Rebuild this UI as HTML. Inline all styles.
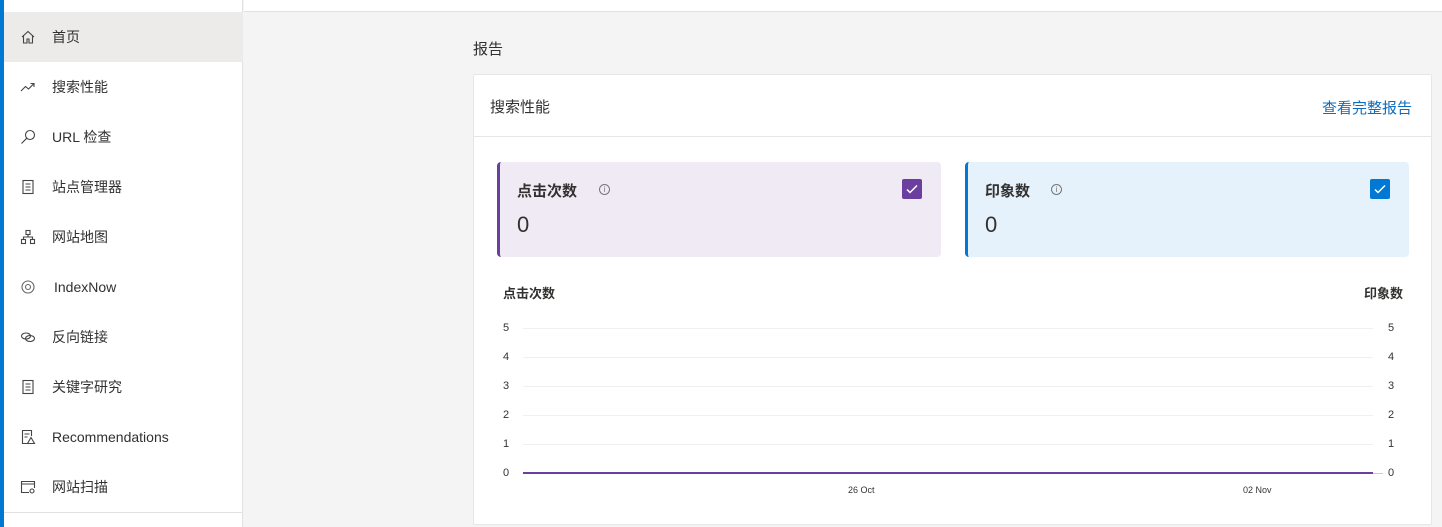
<!DOCTYPE html>
<html><head><meta charset="utf-8"><style>
*{margin:0;padding:0;box-sizing:border-box}
body{width:1442px;height:527px;overflow:hidden;background:#f4f4f4;font-family:"Liberation Sans","Noto Sans CJK SC",sans-serif;color:#323130;position:relative}
.bar{position:absolute;left:0;top:0;width:4px;height:527px;background:#0078d4}
.side{position:absolute;left:4px;top:0;width:239px;height:527px;background:#fff;border-right:1px solid #e1e1e1}
.item{position:absolute;left:0;width:239px;height:50px;font-size:14px;line-height:50px}
.item .t{position:absolute;left:48px;top:0}
.item svg{position:absolute;left:16px;top:17px}
.top{position:absolute;left:244px;top:0;width:1198px;height:12px;background:#fff;border-bottom:1px solid #e1e1e1}
.h{position:absolute;left:473px;top:38px;font-size:15px}
.card{position:absolute;left:473px;top:74px;width:959px;height:451px;background:#fff;border:1px solid #e6e6e6;border-radius:2px}
.ch{height:62px;border-bottom:1px solid #e6e6e6;position:relative}
.tile{position:absolute;top:87px;width:444px;height:95px;border-radius:4px}
.tile .n{position:absolute;left:17px;top:18px;font-size:15px;font-weight:bold}
.tile .v{position:absolute;left:17px;top:50px;font-size:22px}
.tile .i{position:absolute;top:22px;width:11px;height:11px;border:1px solid #777;border-radius:50%;font-size:8px;line-height:9px;text-align:center;color:#777}
.cb{position:absolute;right:19px;top:17px;width:20px;height:20px;border-radius:2px}
.yl{position:absolute;font-size:11px;color:#333}
.gl{position:absolute;left:49px;width:850px;height:1px;background:#f0f0f0}
</style></head><body>
<div class="bar"></div>
<div class="side">
<div class="item" style="top:12px;background:#edebe9"><svg width="16" height="16" fill="none" stroke="#444" stroke-width="1.1"><path d="M2 8L8 2.5 14 8M3.5 6.8V14h3.5v-4h2v4h3.5V6.8"/></svg><span class="t">首页</span></div>
<div class="item" style="top:62px"><svg width="16" height="16" fill="none" stroke="#444" stroke-width="1.1"><path d="M1 12L5.5 7.5 8.5 10 14 4.5M10.5 4.5H14V8"/></svg><span class="t">搜索性能</span></div>
<div class="item" style="top:112px"><svg width="16" height="16" fill="none" stroke="#444" stroke-width="1.1"><circle cx="10" cy="6" r="4.5"/><path d="M6.8 9.2L1.5 14.5"/></svg><span class="t">URL 检查</span></div>
<div class="item" style="top:162px"><svg width="16" height="16" fill="none" stroke="#444" stroke-width="1.1"><rect x="3" y="1.5" width="10" height="13"/><path d="M5.5 5h5M5.5 8h5M5.5 11h5"/></svg><span class="t">站点管理器</span></div>
<div class="item" style="top:212px"><svg width="16" height="16" fill="none" stroke="#444" stroke-width="1.1"><rect x="6" y="1.5" width="4" height="4"/><rect x="1.5" y="10.5" width="4" height="4"/><rect x="10.5" y="10.5" width="4" height="4"/><path d="M8 5.5v2.5M3.5 10.5V8h9v2.5"/></svg><span class="t">网站地图</span></div>
<div class="item" style="top:262px"><svg width="18" height="18" fill="none" stroke="#666" stroke-width="1.1" style="left:15px;top:16px"><circle cx="9" cy="9" r="6"/><circle cx="9" cy="9" r="2.5"/></svg><span class="t" style="left:50px">IndexNow</span></div>
<div class="item" style="top:312px"><svg width="16" height="16" fill="none" stroke="#444" stroke-width="1.1"><ellipse cx="6" cy="7" rx="4.5" ry="3"/><ellipse cx="10" cy="9.5" rx="4.5" ry="3"/></svg><span class="t">反向链接</span></div>
<div class="item" style="top:362px"><svg width="16" height="16" fill="none" stroke="#444" stroke-width="1.1"><rect x="3" y="1.5" width="10" height="13"/><path d="M5.5 5h5M5.5 8h5M5.5 11h5"/></svg><span class="t">关键字研究</span></div>
<div class="item" style="top:412px"><svg width="16" height="16" fill="none" stroke="#444" stroke-width="1.1"><path d="M9 14.5H2.5v-13h9V7"/><path d="M4.5 5h5M4.5 8h3"/><path d="M11 8.5l3.5 6h-7z"/></svg><span class="t">Recommendations</span></div>
<div class="item" style="top:462px"><svg width="16" height="16" fill="none" stroke="#444" stroke-width="1.1"><path d="M9 13.5H1.5v-11h13V9M1.5 5h13"/><circle cx="12" cy="12" r="2"/></svg><span class="t">网站扫描</span></div>
<div style="position:absolute;left:0;top:512px;width:239px;height:1px;background:#e1e1e1"></div>
</div>
<div class="top"></div>
<div class="h">报告</div>
<div class="card">
<div class="ch"><span style="position:absolute;left:16px;top:21px;font-size:15px">搜索性能</span><span style="position:absolute;right:19px;top:22px;font-size:15px;color:#0f6cbd">查看完整报告</span></div>
<div class="tile" style="left:23px;background:#f0eaf5;border-left:3px solid #6b3fa0"><span class="n">点击次数</span><span class="i" style="left:99px">i</span><span class="v">0</span><div class="cb" style="background:#6b3fa0"><svg width="20" height="20" fill="none" stroke="#fff" stroke-width="1.5"><path d="M5 10.5l3 3 7-7"/></svg></div></div>
<div class="tile" style="left:491px;background:#e5f1fb;border-left:3px solid #0078d4"><span class="n">印象数</span><span class="i" style="left:83px">i</span><span class="v">0</span><div class="cb" style="background:#0078d4"><svg width="20" height="20" fill="none" stroke="#fff" stroke-width="1.5"><path d="M5 10.5l3 3 7-7"/></svg></div></div>
<span style="position:absolute;left:29px;top:208px;font-size:13px;font-weight:bold">点击次数</span>
<span style="position:absolute;right:28px;top:208px;font-size:13px;font-weight:bold">印象数</span>
<div class="gl" style="top:253px"></div><div class="gl" style="top:282px"></div><div class="gl" style="top:311px"></div><div class="gl" style="top:340px"></div><div class="gl" style="top:369px"></div>
<div style="position:absolute;left:49px;top:397px;width:850px;height:2px;background:#6b3fa0"></div>
<div style="position:absolute;left:899px;top:398px;width:10px;height:1px;background:#ccc"></div>
<span class="yl" style="left:29px;top:247px">5</span><span class="yl" style="left:29px;top:276px">4</span><span class="yl" style="left:29px;top:305px">3</span><span class="yl" style="left:29px;top:334px">2</span><span class="yl" style="left:29px;top:363px">1</span><span class="yl" style="left:29px;top:392px">0</span>
<span class="yl" style="left:914px;top:247px">5</span><span class="yl" style="left:914px;top:276px">4</span><span class="yl" style="left:914px;top:305px">3</span><span class="yl" style="left:914px;top:334px">2</span><span class="yl" style="left:914px;top:363px">1</span><span class="yl" style="left:914px;top:392px">0</span>
<span class="yl" style="left:374px;top:410px;font-size:9px">26 Oct</span>
<span class="yl" style="left:769px;top:410px;font-size:9px">02 Nov</span>
</div>
</body></html>
